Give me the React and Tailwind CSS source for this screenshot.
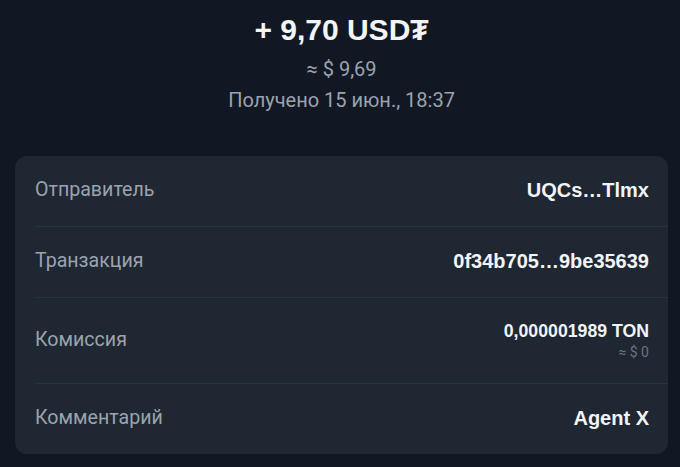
import React from 'react';

const rows = [
  { label: 'Отправитель', value: 'UQCs…Tlmx' },
  { label: 'Транзакция', value: '0f34b705…9be35639' },
  { label: 'Комиссия', value: '0,000001989 TON', sub: '≈ $ 0' },
  { label: 'Комментарий', value: 'Agent X' },
];

export default function App() {
  return (
    <div className="min-h-[467px] bg-[#111823] pl-[15px] pr-[12px] pt-[11px] pb-[14px]" style={{ fontFamily: 'Roboto, sans-serif' }}>
      <div className="flex flex-col items-center">
        <h1 className="text-[30px] leading-[38px] font-bold text-[#f3f4f6]" style={{ fontFamily: '"Liberation Sans", Arial, sans-serif' }}>
          + 9,70 USD₮
        </h1>
        <p className="mt-[8px] text-[20px] leading-[24px] text-[#9ca3af]">≈ $ 9,69</p>
        <p className="mt-[7px] text-[20px] leading-[24px] text-[#9ca3af]">Получено 15 июн., 18:37</p>
      </div>

      <div className="mt-[44px] rounded-xl bg-[#1f2733] pl-[20px]">
        {rows.map((row, i) => (
          <div
            key={row.label}
            className={`flex items-center justify-between pr-[19px] ${row.sub ? 'h-[86px]' : i === rows.length - 1 ? 'h-[70px]' : 'h-[71px]'} ${i < rows.length - 1 ? 'border-b border-[#2a3340]' : ''}`}
          >
            <span className="text-[19.6px] leading-[24px] text-[#9ca3af] -translate-y-[1px]">{row.label}</span>
            <div className="flex flex-col items-end -translate-y-[1px]" style={{ fontFamily: '"Liberation Sans", Arial, sans-serif' }}>
              <span className={`${row.sub ? 'text-[17.7px]' : 'text-[20px]'} leading-[24px] font-bold text-[#f3f4f6]`}>{row.value}</span>
              {row.sub && <span className="text-[14px] leading-[18px] text-[#6b7280]" style={{ fontFamily: 'Roboto, sans-serif' }}>{row.sub}</span>}
            </div>
          </div>
        ))}
      </div>
    </div>
  );
}
